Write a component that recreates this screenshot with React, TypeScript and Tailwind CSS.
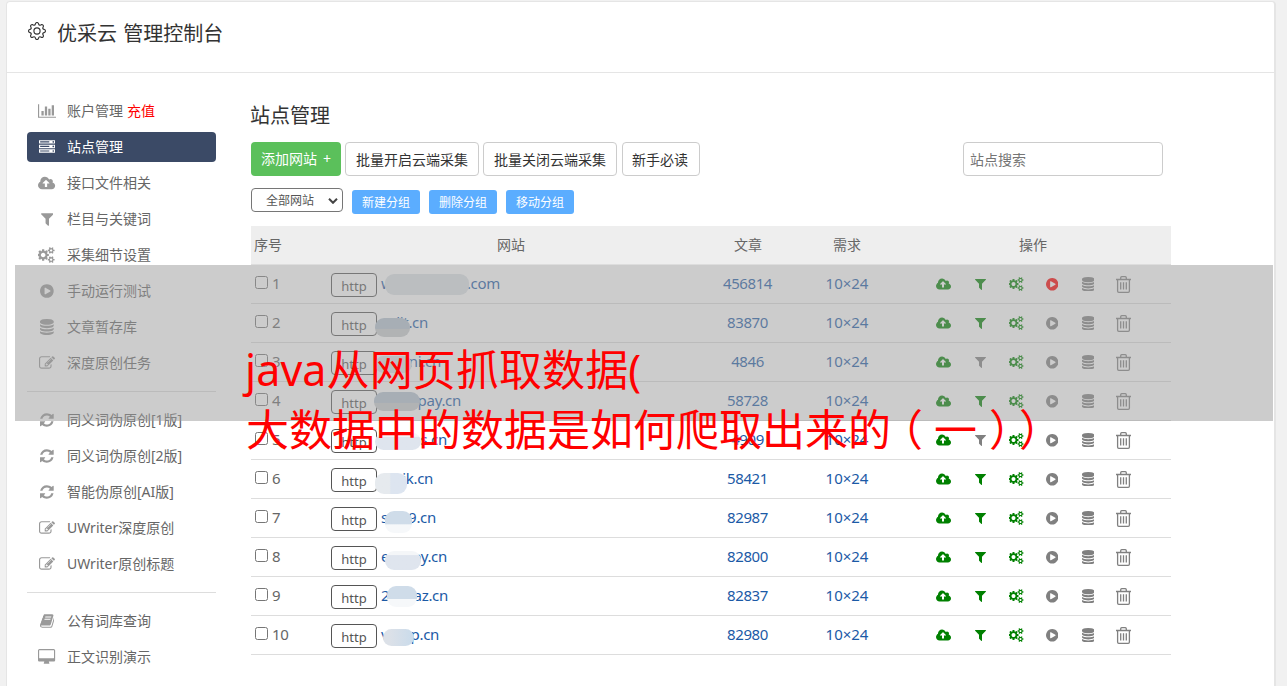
import React from 'react'
import { BsGear } from 'react-icons/bs'
import clsx from 'clsx'

type IconName =
    | 'chart' | 'server' | 'upload' | 'filter' | 'cogs' | 'play'
    | 'database' | 'edit' | 'refresh' | 'book' | 'desktop'

// [left, width, path], all drawn on a 1792 units high em box
const icons: Record<IconName, [number, number, string]> = {
    chart: [0, 2048, 'M640 896v512h-256v-512h256zm384-512v1024h-256v-1024h256zm1024 1152v128h-2048v-1536h128v1408h1920zm-640-896v768h-256v-768h256zm384-384v1152h-256v-1152h256z'],
    server: [0, 1792, 'M128 1408h1024v-128h-1024v128zm0-512h1024v-128h-1024v128zm1568 448q0-40-28-68t-68-28-68 28-28 68 28 68 68 28 68-28 28-68zm-1568-960h1024v-128h-1024v128zm1568 448q0-40-28-68t-68-28-68 28-28 68 28 68 68 28 68-28 28-68zm0-512q0-40-28-68t-68-28-68 28-28 68 28 68 68 28 68-28 28-68zm96 832v384h-1792v-384h1792zm0-512v384h-1792v-384h1792zm0-512v384h-1792v-384h1792z'],
    upload: [0, 1920, 'M1280 928q0-14-9-23l-352-352q-9-9-23-9t-23 9l-351 351q-10 12-10 24 0 14 9 23t23 9h224v352q0 13 9.5 22.5t22.5 9.5h192q13 0 22.5-9.5t9.5-22.5v-352h224q13 0 22.5-9.5t9.5-22.5zm640 288q0 159-112.5 271.5t-271.5 112.5h-1088q-185 0-316.5-131.5t-131.5-316.5q0-130 70-240t188-165q-2-30-2-43 0-212 150-362t362-150q156 0 285.5 87t188.5 231q71-62 166-62 106 0 181 75t75 181q0 76-41 138 130 31 213.5 135.5t83.5 238.5z'],
    filter: [192, 1408, 'M1595 295q17 41-14 70l-493 493v742q0 42-39 59-13 5-25 5-27 0-45-19l-256-256q-19-19-19-45v-486l-493-493q-31-29-14-70 17-39 59-39h1280q42 0 59 39z'],
    cogs: [0, 1920, 'M832 896q0-106-75-181t-181-75-181 75-75 181 75 181 181 75 181-75 75-181zm768 512q0-52-38-90t-90-38-90 38-38 90q0 53 37.5 90.5t90.5 37.5 90.5-37.5 37.5-90.5zm0-1024q0-52-38-90t-90-38-90 38-38 90q0 53 37.5 90.5t90.5 37.5 90.5-37.5 37.5-90.5zm-384 421v185q0 10-7 19.5t-16 10.5l-155 24q-11 35-32 76 34 48 90 115 7 11 7 20 0 12-7 19-23 30-82.5 89.5t-78.5 59.5q-11 0-21-7l-115-90q-37 19-77 31-11 108-23 155-7 24-30 24h-186q-11 0-20-7.5t-10-17.5l-23-153q-34-10-75-31l-118 89q-7 7-20 7-11 0-21-8-144-133-144-160 0-9 7-19 10-14 41-53t47-61q-23-44-35-82l-152-24q-10-1-17-9.5t-7-19.5v-185q0-10 7-19.5t16-10.5l155-24q11-35 32-76-34-48-90-115-7-11-7-20 0-12 7-20 22-30 82-89t79-59q11 0 21 7l115 90q34-18 77-32 11-108 23-154 7-24 30-24h186q11 0 20 7.5t10 17.5l23 153q34 10 75 31l118-89q8-7 20-7 11 0 21 8 144 133 144 160 0 8-7 19-12 16-42 54t-45 60q23 48 34 82l152 23q10 2 17 10.5t7 19.5zm640 533v140q0 16-149 31-12 27-30 52 51 113 51 138 0 4-4 7-122 71-124 71-8 0-46-47t-52-68q-20 2-30 2t-30-2q-14 21-52 68t-46 47q-2 0-124-71-4-3-4-7 0-25 51-138-18-25-30-52-149-15-149-31v-140q0-16 149-31 13-29 30-52-51-113-51-138 0-4 4-7 4-2 35-20t59-34 30-16q8 0 46 46.5t52 67.5q20-2 30-2t30 2q51-71 92-112l6-2q4 0 124 70 4 3 4 7 0 25-51 138 17 23 30 52 149 15 149 31zm0-1024v140q0 16-149 31-12 27-30 52 51 113 51 138 0 4-4 7-122 71-124 71-8 0-46-47t-52-68q-20 2-30 2t-30-2q-14 21-52 68t-46 47q-2 0-124-71-4-3-4-7 0-25 51-138-18-25-30-52-149-15-149-31v-140q0-16 149-31 13-29 30-52-51-113-51-138 0-4 4-7 4-2 35-20t59-34 30-16q8 0 46 46.5t52 67.5q20-2 30-2t30 2q51-71 92-112l6-2q4 0 124 70 4 3 4 7 0 25-51 138 17 23 30 52 149 15 149 31z'],
    play: [128, 1536, 'M896 128q209 0 385.5 103t279.5 279.5 103 385.5-103 385.5-279.5 279.5-385.5 103-385.5-103-279.5-279.5-103-385.5 103-385.5 279.5-279.5 385.5-103zm384 823q32-18 32-55t-32-55l-544-320q-31-19-64-1-32 19-32 56v640q0 37 32 56 16 8 32 8 17 0 32-9z'],
    database: [128, 1536, 'M896 768q237 0 443-43t325-127v170q0 69-103 128t-280 93.5-385 34.5-385-34.5-280-93.5-103-128v-170q119 84 325 127t443 43zm0 768q237 0 443-43t325-127v170q0 69-103 128t-280 93.5-385 34.5-385-34.5-280-93.5-103-128v-170q119 84 325 127t443 43zm0-384q237 0 443-43t325-127v170q0 69-103 128t-280 93.5-385 34.5-385-34.5-280-93.5-103-128v-170q119 84 325 127t443 43zm0-1152q208 0 385 34.5t280 93.5 103 128v128q0 69-103 128t-280 93.5-385 34.5-385-34.5-280-93.5-103-128v-128q0-69 103-128t280-93.5 385-34.5z'],
    edit: [0, 1792, 'M888 1184l116-116-152-152-116 116v56h96v96h56zm440-720q-16-16-33 1l-350 350q-17 17-1 33t33-1l350-350q17-17 1-33zm80 594v190q0 119-84.5 203.5t-203.5 84.5h-832q-119 0-203.5-84.5t-84.5-203.5v-832q0-119 84.5-203.5t203.5-84.5h832q63 0 117 25 15 7 18 23 3 17-9 29l-49 49q-14 14-32 8-23-6-45-6h-832q-66 0-113 47t-47 113v832q0 66 47 113t113 47h832q66 0 113-47t47-113v-126q0-13 9-22l64-64q15-15 35-7t20 29zm-96-738l288 288-672 672h-288v-288zm444 132l-92 92-288-288 92-92q28-28 68-28t68 28l152 152q28 28 28 68t-28 68z'],
    refresh: [128, 1536, 'M1639 1056q0 5-1 7-64 268-268 434.5t-478 166.5q-146 0-282.5-55t-243.5-157l-129 129q-19 19-45 19t-45-19-19-45v-448q0-26 19-45t45-19h448q26 0 45 19t19 45-19 45l-137 137q71 66 161 102t187 36q134 0 250-65t186-179q11-17 53-117 8-23 30-23h192q13 0 22.5 9.5t9.5 22.5zm25-800v448q0 26-19 45t-45 19h-448q-26 0-45-19t-19-45 19-45l138-138q-148-137-349-137-134 0-250 65t-186 179q-11 17-53 117-8 23-30 23h-199q-13 0-22.5-9.5t-9.5-22.5v-7q65-268 270-434.5t480-166.5q146 0 284 55.5t245 156.5l130-129q19-19 45-19t45 19 19 45z'],
    book: [64, 1664, 'M1703 478q40 57 18 129l-275 906q-19 64-76.5 107.5t-122.5 43.5h-923q-77 0-148.5-53.5t-99.5-131.5q-24-67-2-127 0-4 3-27t4-37q1-8-3-21.5t-3-19.5q2-11 8-21t16.5-23.5 16.5-23.5q23-38 45-91.5t30-91.5q3-10 .5-30t-.5-28q3-11 17-28t17-23q21-36 42-92t25-90q1-9-2.5-32t.5-28q4-13 22-30.5t22-22.5q19-26 42.5-84.5t27.5-96.5q1-8-3-25.5t-2-26.5q2-8 9-18t18-23 17-21q8-12 16.5-30.5t15-35 16-36 19.5-32 26.5-23.5 36-11.5 47.5 5.5l-1 3q38-9 51-9h761q74 0 114 56t18 130l-274 906q-36 119-71.5 153.5t-128.5 34.5h-869q-27 0-38 15-11 16-1 43 24 70 144 70h923q29 0 56-15.5t35-41.5l300-987q7-22 5-57 38 15 59 43zm-1064 2q-4 13 2 22.5t20 9.5h608q13 0 25.5-9.5t16.5-22.5l21-64q4-13-2-22.5t-20-9.5h-608q-13 0-25.5 9.5t-16.5 22.5zm-83 256q-4 13 2 22.5t20 9.5h608q13 0 25.5-9.5t16.5-22.5l21-64q4-13-2-22.5t-20-9.5h-608q-13 0-25.5 9.5t-16.5 22.5z'],
    desktop: [-64, 1920, 'M1728 992v-832q0-13-9.5-22.5t-22.5-9.5h-1600q-13 0-22.5 9.5t-9.5 22.5v832q0 13 9.5 22.5t22.5 9.5h1600q13 0 22.5-9.5t9.5-22.5zm128-832v1088q0 66-47 113t-113 47h-544q0 37 16 77.5t32 71 16 43.5q0 26-19 45t-45 19h-512q-26 0-45-19t-19-45q0-14 16-44t32-70 16-78h-544q-66 0-113-47t-47-113v-1088q0-66 47-113t113-47h1600q66 0 113 47t47 113z'],
}

interface IconProps {
    name: IconName;
    size: number;
    className?: string;
}

const Icon = ({ name, size, className }: IconProps) => {
    const [left, width, d] = icons[name]
    return (
        <svg
            viewBox={`${left} 0 ${width} 1792`}
            width={(width / 1792) * size}
            height={size}
            fill="currentColor"
            className={clsx('shrink-0', className)}
        >
            <path d={d} />
        </svg>
    )
}

const TrashIcon = () => (
    <svg viewBox="0 0 15 17" width="15" height="17" fill="none" stroke="currentColor" strokeWidth="1.3">
        <path d="M0 3.5h15M4.7 3.2V1.7q0-1 1-1h3.6q1 0 1 1v1.5M1.6 3.5v11.6q0 1.2 1.2 1.2h9.4q1.2 0 1.2-1.2V3.5M4.7 6.3v7.2M7.5 6.3v7.2M10.3 6.3v7.2" />
    </svg>
)

interface MenuEntry {
    icon: IconName;
    label: string;
    extra?: string;
    active?: boolean;
}

const menu: MenuEntry[][] = [
    [
        { icon: 'chart', label: '账户管理', extra: '充值' },
        { icon: 'server', label: '站点管理', active: true },
        { icon: 'upload', label: '接口文件相关' },
        { icon: 'filter', label: '栏目与关键词' },
        { icon: 'cogs', label: '采集细节设置' },
        { icon: 'play', label: '手动运行测试' },
        { icon: 'database', label: '文章暂存库' },
        { icon: 'edit', label: '深度原创任务' },
    ],
    [
        { icon: 'refresh', label: '同义词伪原创[1版]' },
        { icon: 'refresh', label: '同义词伪原创[2版]' },
        { icon: 'refresh', label: '智能伪原创[AI版]' },
        { icon: 'edit', label: 'UWriter深度原创' },
        { icon: 'edit', label: 'UWriter原创标题' },
    ],
    [
        { icon: 'book', label: '公有词库查询' },
        { icon: 'desktop', label: '正文识别演示' },
    ],
]

const tones = {
    plain: 'bg-[#dde2e7]',
    side: 'bg-linear-to-r from-[#e6eaee] from-45% to-[#dde5f0] to-50%',
    deep: 'bg-linear-to-r from-[#dce1e8] from-20% to-[#c9dbeb]',
    top: 'bg-linear-to-b from-[#cfdce9] from-60% to-[#f6f8fa] to-62%',
    half: 'bg-linear-to-b from-[#b5c2d0] from-55% to-[#c9cccf] to-58%',
    bottom: 'bg-linear-to-b from-[#f4f6f8] from-20% to-[#dfe5ee] to-24%',
}

// width: full length of the domain, mask: [left, top, width, height] of the blurred part
interface Site {
    start: string;
    end: string;
    width: number;
    mask: [number, number, number, number];
    tone: keyof typeof tones;
    count: number;
    filter?: boolean;
    running?: boolean;
}

const sites: Site[] = [
    { start: 'w', end: '.com', width: 119, mask: [4, 9, 84, 21], tone: 'plain', count: 456814, filter: true, running: true },
    { start: '', end: 'lit.cn', width: 47, mask: [-6, 14, 35, 19], tone: 'half', count: 83870, filter: true },
    { start: '', end: 'ni.cn', width: 60, mask: [-6, 13, 37, 17], tone: 'plain', count: 4846 },
    { start: '', end: 'pay.cn', width: 80, mask: [-7, 10, 46, 19], tone: 'half', count: 58728, filter: true },
    { start: '', end: 's.cn', width: 66, mask: [-6, 12, 46, 17], tone: 'bottom', count: 4909 },
    { start: '', end: 'ik.cn', width: 52, mask: [-6, 13, 32, 21], tone: 'side', count: 58421, filter: true },
    { start: 'sf', end: '39.cn', width: 55, mask: [4, 12, 27, 22], tone: 'top', count: 82987, filter: true },
    { start: 'e', end: 'oy.cn', width: 66, mask: [4, 13, 36, 19], tone: 'bottom', count: 82800, filter: true },
    { start: '2', end: 'az.cn', width: 67, mask: [6, 9, 30, 21], tone: 'top', count: 82837, filter: true },
    { start: 'v', end: 'p.cn', width: 58, mask: [2, 13, 31, 17], tone: 'deep', count: 82980, filter: true },
]

const columns = 'grid grid-cols-[80px_360px_114px_84px_282px]'

const Sidebar = () => (
    <div className="w-[189px] shrink-0">
        {menu.map((group, i) => (
            <React.Fragment key={i}>
                {i > 0 && <div className="my-[13px] h-px bg-[#ddd]" />}
                <div className="flex flex-col gap-1.5">
                    {group.map((item) => (
                        <div
                            key={item.label}
                            className={clsx(
                                'flex h-[30px] items-center rounded-[4px] pl-[9px]',
                                item.active ? 'bg-[#3b4a66] text-white' : 'text-[#666]'
                            )}
                        >
                            <div className={clsx('mr-[9px] flex w-[22px] justify-center', !item.active && 'text-[#999]')}>
                                <Icon name={item.icon} size={16} />
                            </div>
                            <span className="whitespace-nowrap">{item.label}</span>
                            {item.extra && <span className="ml-1 text-[#f00]">{item.extra}</span>}
                        </div>
                    ))}
                </div>
            </React.Fragment>
        ))}
    </div>
)

const Toolbar = () => (
    <>
        <div className="mt-3 flex h-[34px] w-[912px] items-stretch">
            <button className="w-[90px] rounded-[4px] bg-[#5bc05b] text-white">添加网站<span className="ml-1.5">+</span></button>
            <button className="ml-1 w-[134px] rounded-[4px] border border-[#ccc] pt-0.5 text-[#333]">批量开启云端采集</button>
            <button className="ml-1 w-[134px] rounded-[4px] border border-[#ccc] pt-0.5 text-[#333]">批量关闭云端采集</button>
            <button className="ml-[5px] w-[78px] rounded-[4px] border border-[#ccc] pt-0.5 pr-0.5 text-[#333]">新手必读</button>
            <input
                placeholder="站点搜索"
                className="ml-auto w-[200px] rounded-[4px] border border-[#ccc] px-1.5 pt-0.5 placeholder:text-[#757575]"
            />
        </div>
        <div className="mt-3 flex h-[26px] items-start text-xs">
            <div className="flex h-6 w-[92px] items-center justify-between rounded-[4px] border border-[#767676] pt-px pr-1 pl-[14px] text-[#555]">
                全部网站
                <svg viewBox="0 0 10 6" width="10" height="6" fill="none" stroke="#444" strokeWidth="2">
                    <path d="M1 .8l4 4 4-4" />
                </svg>
            </div>
            {['新建分组', '删除分组', '移动分组'].map((label) => (
                <button key={label} className="mt-0.5 ml-[9px] h-6 w-[68px] rounded-[3px] bg-[#5badff] pt-0.5 text-white">
                    {label}
                </button>
            ))}
        </div>
    </>
)

const SiteRow = ({ site, index }: { site: Site, index: number }) => {
    const [left, top, width, height] = site.mask
    return (
        <div className={`${columns} h-[39px] items-center border-b border-[#ddd] text-[15px]`}>
            <div className="flex items-center pl-1 tracking-[-0.4px] text-[#666]">
                <span className="mr-1 mb-[3px] size-[13px] rounded-[2.5px] border border-[#767676] bg-white" />
                {index + 1}
            </div>
            <div className="flex h-full items-center">
                <span className="mt-0.5 flex h-6 w-[46px] items-center justify-center rounded-[4px] border border-[#555] pt-0.5 text-[13px] text-[#555]">
                    http
                </span>
                <div
                    className="relative ml-1 flex h-full items-center justify-between tracking-[-0.3px] text-[#1b5aa6]"
                    style={{ width: site.width }}
                >
                    <span>{site.start}</span>
                    <span>{site.end}</span>
                    <span
                        className={clsx('absolute rounded-[9px]', tones[site.tone])}
                        style={{ left, top, width, height }}
                    />
                </div>
            </div>
            <div className="pr-px text-center tracking-[-0.4px] text-[#1b5aa6]">{site.count}</div>
            <div className="text-center text-[#1b5aa6]">10×24</div>
            <div className="flex items-center pl-[37px] text-[#808080]">
                <div className="flex w-9 justify-center pr-px text-[#008000]"><Icon name="upload" size={14} /></div>
                <div className={clsx('flex w-9 justify-center', site.filter && 'text-[#008000]')}><Icon name="filter" size={14} /></div>
                <div className="flex w-9 justify-center text-[#008000]"><Icon name="cogs" size={14} /></div>
                <div className={clsx('flex w-9 justify-center', site.running && 'text-[#f00]')}><Icon name="play" size={14.5} /></div>
                <div className="flex w-9 justify-center"><Icon name="database" size={14.5} /></div>
                <div className="flex w-[35px] justify-center"><TrashIcon /></div>
            </div>
        </div>
    )
}

const SiteTable = () => (
    <div className="mt-3 w-[920px]">
        <div className={`${columns} h-[39px] items-center border-b border-[#ddd] bg-[#eee] text-center text-[#666]`}>
            <div className="pl-[3px] text-left">序号</div>
            <div>网站</div>
            <div>文章</div>
            <div>需求</div>
            <div className="pl-1.5">操作</div>
        </div>
        {sites.map((site, i) => (
            <SiteRow key={i} site={site} index={i} />
        ))}
    </div>
)

// translucent band with the article title, lies over the whole console
const TitleBanner = () => (
    <>
        <div className="absolute top-[265px] left-[15px] h-[156px] w-[1258px] bg-[#999999]/50" />
        <div className="absolute top-[340px] left-[246px] text-[43px] leading-[60px] whitespace-nowrap text-[#f00]">
            <div className="-ml-px tracking-[0.1px]">java从网页抓取数据(</div>
            <div className="flex">
                <span>大数据中的数据是如何爬取出来的</span>
                <span className="mr-[11px] -ml-[11px]">（</span>
                <span>一</span>
                <span className="ml-3">）</span>
                <span className="-ml-[13px]">）</span>
            </div>
        </div>
    </>
)

const App = () => {
    return (
        <div className="relative h-[686px] w-[1287px] overflow-hidden bg-[#f1f1f1] px-1.5 pt-px font-['Noto_Sans','Noto_Sans_CJK_SC',sans-serif] text-sm">
            <div className="h-[700px] w-[1270px] rounded-[4px] border border-r-2 border-[#e5e5e5] bg-white">
                <div className="flex h-[71px] items-start border-b border-[#e5e5e5] pt-4 pl-[21px] text-xl text-[#333]">
                    <BsGear className="mt-1 mr-[11px] size-[18px]" />
                    <h1 className="leading-[31px] [word-spacing:1px]">优采云 管理控制台</h1>
                </div>
                <div className="flex pt-[23px] pl-5">
                    <Sidebar />
                    <div className="ml-[35px] pt-[5px]">
                        <h2 className="-ml-px text-xl leading-[29px] text-[#333]">站点管理</h2>
                        <Toolbar />
                        <SiteTable />
                    </div>
                </div>
            </div>
            <TitleBanner />
        </div>
    )
}

export default App;
